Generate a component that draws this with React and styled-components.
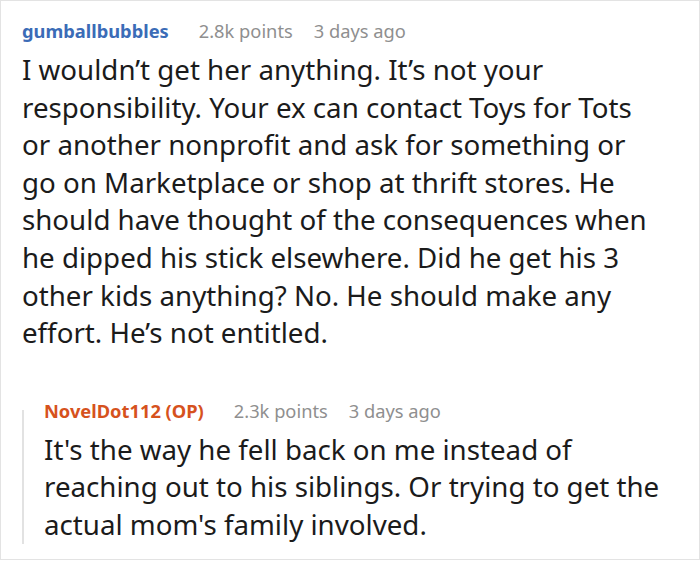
import React from 'react'
import styled, { createGlobalStyle } from 'styled-components'

const GlobalStyle = createGlobalStyle`
    html, body {
        margin: 0;
        padding: 0;
        background: #fff;
    }

    body {
        font-family: "Noto Sans", "Open Sans", sans-serif;
        color: #1b1b1b;
    }
`

const Card = styled.div`
    box-sizing: border-box;
    width: 700px;
    height: 560px;
    border: 1px solid #e3e3e3;
    padding: 16px 16px 0 21px;
    overflow: hidden;
`

const CommentBox = styled.div`
    display: flex;
    flex-direction: column;
`

const Meta = styled.div`
    display: flex;
    align-items: baseline;
    gap: 21px;
    height: 28px;
    font-size: 18.3px;
    line-height: 28px;
    white-space: nowrap;
`

const Author = styled.span`
    font-weight: 700;
    color: ${props => props.$op ? '#d6521d' : '#3b6cb7'};
    margin-right: 9px;
`

const Faint = styled.span`
    color: #8f8f8f;
`

const Body = styled.p`
    margin: 6px 0 0;
    font-size: 27.7px;
    line-height: 37.6px;
    white-space: nowrap;
`

const Replies = styled.div`
    position: relative;
    margin-top: 45px;
    padding-left: 22px;

    &::before {
        content: "";
        position: absolute;
        left: 0;
        top: 13px;
        bottom: 0;
        width: 2px;
        background: #e2e2e2;
    }
`

const Comment = ({ author, op, points, age, lines, children }) => (
    <CommentBox>
        <Meta>
            <Author $op={ op }>{ author }</Author>
            <Faint>{ points } points</Faint>
            <Faint>{ age }</Faint>
        </Meta>
        <Body>
            { lines.map((line, i) => (
                <React.Fragment key={ i }>
                    { i > 0 && <br /> }
                    { line }
                </React.Fragment>
            )) }
        </Body>
        { children }
    </CommentBox>
)

const App = () => (
    <>
        <GlobalStyle />
        <Card>
            <Comment
                author="gumballbubbles"
                points="2.8k"
                age="3 days ago"
                lines={ [
                    'I wouldn’t get her anything. It’s not your',
                    'responsibility. Your ex can contact Toys for Tots',
                    'or another nonprofit and ask for something or',
                    'go on Marketplace or shop at thrift stores. He',
                    'should have thought of the consequences when',
                    'he dipped his stick elsewhere. Did he get his 3',
                    'other kids anything? No. He should make any',
                    'effort. He’s not entitled.'
                ] }>
                <Replies>
                    <Comment
                        op
                        author="NovelDot112 (OP)"
                        points="2.3k"
                        age="3 days ago"
                        lines={ [
                            'It\'s the way he fell back on me instead of',
                            'reaching out to his siblings. Or trying to get the',
                            'actual mom\'s family involved.'
                        ] } />
                </Replies>
            </Comment>
        </Card>
    </>
)

export default App
